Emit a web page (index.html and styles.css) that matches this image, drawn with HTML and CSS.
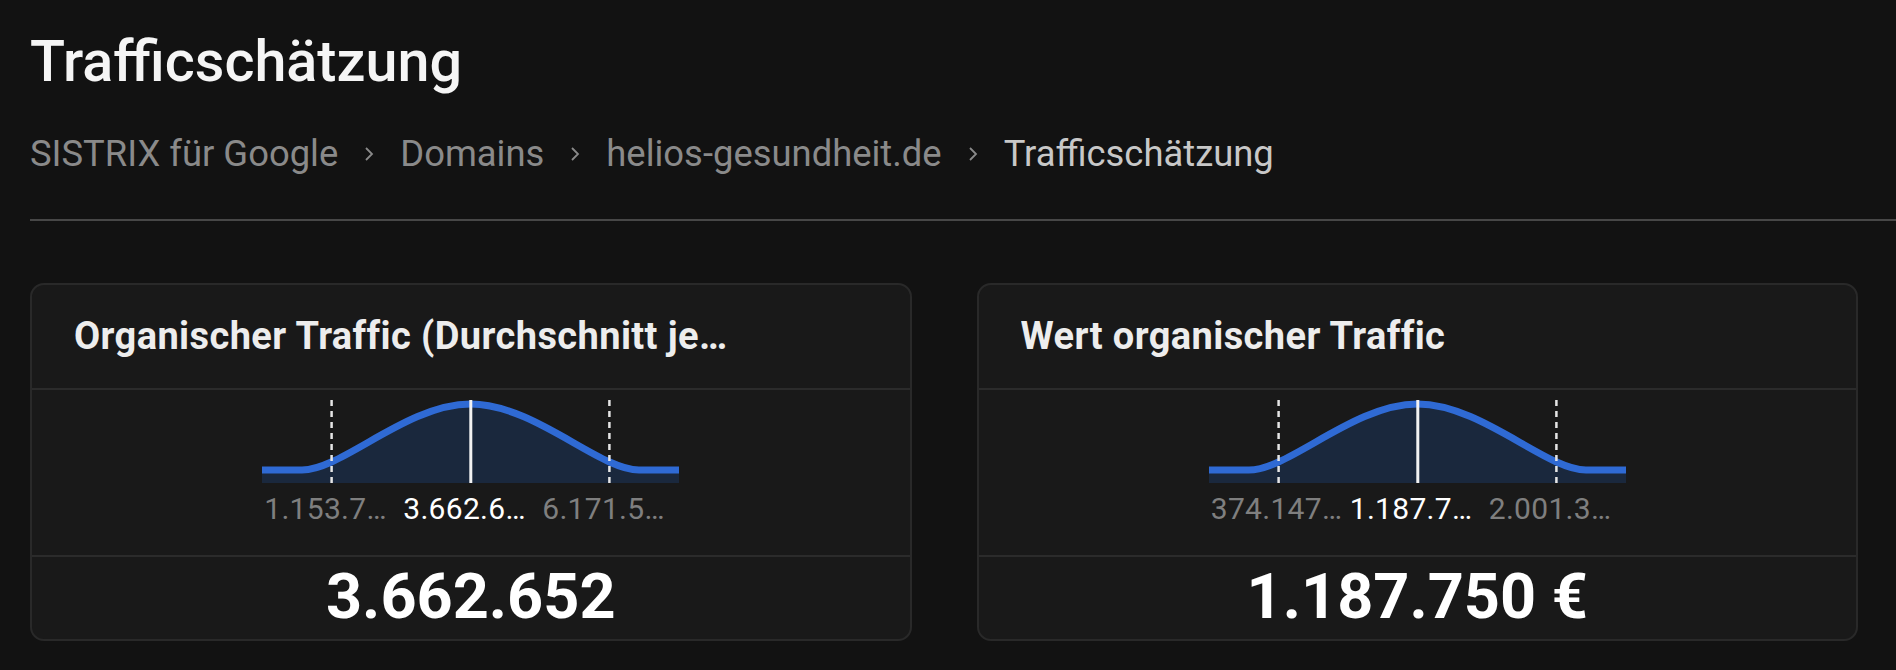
FILE: index.html
```html
<!DOCTYPE html>
<html lang="de">
<head>
<meta charset="utf-8">
<title>Trafficschätzung</title>
<link rel="stylesheet" href="styles.css">
</head>
<body>
<main class="page">
  <h1 class="page-title">Trafficschätzung</h1>
  <nav class="breadcrumb">
    <span class="crumb">SISTRIX für Google</span>
    <span class="sep"><svg width="10" height="16" viewBox="0 0 10 16"><polyline points="2,2 8,8 2,14" fill="none" stroke="currentColor" stroke-width="1.8"/></svg></span>
    <span class="crumb">Domains</span>
    <span class="sep"><svg width="10" height="16" viewBox="0 0 10 16"><polyline points="2,2 8,8 2,14" fill="none" stroke="currentColor" stroke-width="1.8"/></svg></span>
    <span class="crumb">helios-gesundheit.de</span>
    <span class="sep"><svg width="10" height="16" viewBox="0 0 10 16"><polyline points="2,2 8,8 2,14" fill="none" stroke="currentColor" stroke-width="1.8"/></svg></span>
    <span class="crumb current">Trafficschätzung</span>
  </nav>
  <hr class="divider">
  <section class="cards">
    <article class="card">
      <header class="card-head"><h2 class="card-title">Organischer Traffic (Durchschnitt je Monat)</h2></header>
      <div class="card-chart">
        <svg class="bell" width="417" height="83" viewBox="0 0 417 83">
          <path class="bell-fill" d="M0,70 L40,70 C80,70 145,4 208.5,4 C272,4 337,70 377,70 L417,70 L417,83 L0,83 Z"/>
          <path class="bell-line" d="M0,70 L40,70 C80,70 145,4 208.5,4 C272,4 337,70 377,70 L417,70"/>
          <line class="dash" x1="69.6" y1="0" x2="69.6" y2="83"/>
          <line class="dash" x1="347.4" y1="0" x2="347.4" y2="83"/>
          <line class="mid" x1="208.8" y1="0" x2="208.8" y2="83"/>
        </svg>
        <div class="bell-labels">
          <span class="lbl">1.153.753</span>
          <span class="lbl main">3.662.652</span>
          <span class="lbl">6.171.551</span>
        </div>
      </div>
      <div class="card-value">3.662.652</div>
    </article>
    <article class="card">
      <header class="card-head"><h2 class="card-title">Wert organischer Traffic</h2></header>
      <div class="card-chart">
        <svg class="bell" width="417" height="83" viewBox="0 0 417 83">
          <path class="bell-fill" d="M0,70 L40,70 C80,70 145,4 208.5,4 C272,4 337,70 377,70 L417,70 L417,83 L0,83 Z"/>
          <path class="bell-line" d="M0,70 L40,70 C80,70 145,4 208.5,4 C272,4 337,70 377,70 L417,70"/>
          <line class="dash" x1="69.6" y1="0" x2="69.6" y2="83"/>
          <line class="dash" x1="347.4" y1="0" x2="347.4" y2="83"/>
          <line class="mid" x1="208.8" y1="0" x2="208.8" y2="83"/>
        </svg>
        <div class="bell-labels">
          <span class="lbl">374.147 €</span>
          <span class="lbl main">1.187.750 €</span>
          <span class="lbl">2.001.353 €</span>
        </div>
      </div>
      <div class="card-value">1.187.750 €</div>
    </article>
  </section>
</main>
</body>
</html>
```

FILE: styles.css
```css
html, body {
  margin: 0;
  padding: 0;
  background: #121212;
}
body {
  font-family: Roboto, "Liberation Sans", sans-serif;
  color: #f2f2f2;
  width: 1896px;
  height: 670px;
  overflow: hidden;
}
.page {
  padding: 28px 0 0 30px;
}
.page-title {
  margin: 0;
  font-size: 57.5px;
  font-weight: 500;
  line-height: 68px;
  color: #f5f5f5;
}
.breadcrumb {
  margin-top: 37px;
  display: flex;
  align-items: center;
  font-size: 36.4px;
  line-height: 42px;
  color: #8a8a8a;
  white-space: nowrap;
}
.crumb.current {
  color: #c8c8c8;
}
.sep {
  width: 62px;
  display: flex;
  justify-content: center;
  align-items: center;
  color: #8a8a8a;
}
.sep svg {
  display: block;
}
.divider {
  margin: 44px 0 0 0;
  border: 0;
  height: 2px;
  background: #474747;
}
.cards {
  margin-top: 62px;
  padding-right: 38px;
  display: grid;
  grid-template-columns: 1fr 1fr;
  gap: 65px;
}
.card {
  background: #191919;
  border: 2px solid #292929;
  border-radius: 14px;
  overflow: hidden;
}
.card-head {
  padding: 30px 181px 30px 42px;
  border-bottom: 2px solid #2b2b2b;
}
.card-title {
  margin: 0;
  font-size: 38px;
  font-weight: 700;
  letter-spacing: 0.4px;
  line-height: 43px;
  color: #ededed;
  white-space: nowrap;
  overflow: hidden;
  text-overflow: ellipsis;
}
.card-chart {
  padding: 10px 0 29px;
  display: flex;
  flex-direction: column;
  align-items: center;
  border-bottom: 2px solid #2b2b2b;
}
.bell {
  display: block;
}
.bell-fill {
  fill: #1a283d;
}
.bell-line {
  fill: none;
  stroke: #2f6ad4;
  stroke-width: 7;
}
.dash {
  stroke: #e6e6e6;
  stroke-width: 2.5;
  stroke-dasharray: 6 5;
}
.mid {
  stroke: #f2f2f2;
  stroke-width: 3;
}
.bell-labels {
  margin-top: 8px;
  width: 417px;
  display: grid;
  grid-template-columns: repeat(3, 1fr);
  font-size: 30px;
  letter-spacing: 0.3px;
  line-height: 35px;
}
.lbl {
  padding: 0 2px;
  text-align: center;
  white-space: nowrap;
  overflow: hidden;
  text-overflow: ellipsis;
  color: #7f7f7f;
}
.lbl.main {
  color: #ffffff;
}
.card-value {
  padding: 8px 0 10px;
  text-align: center;
  font-size: 63px;
  font-weight: 700;
  line-height: 64px;
  color: #ffffff;
}
```
